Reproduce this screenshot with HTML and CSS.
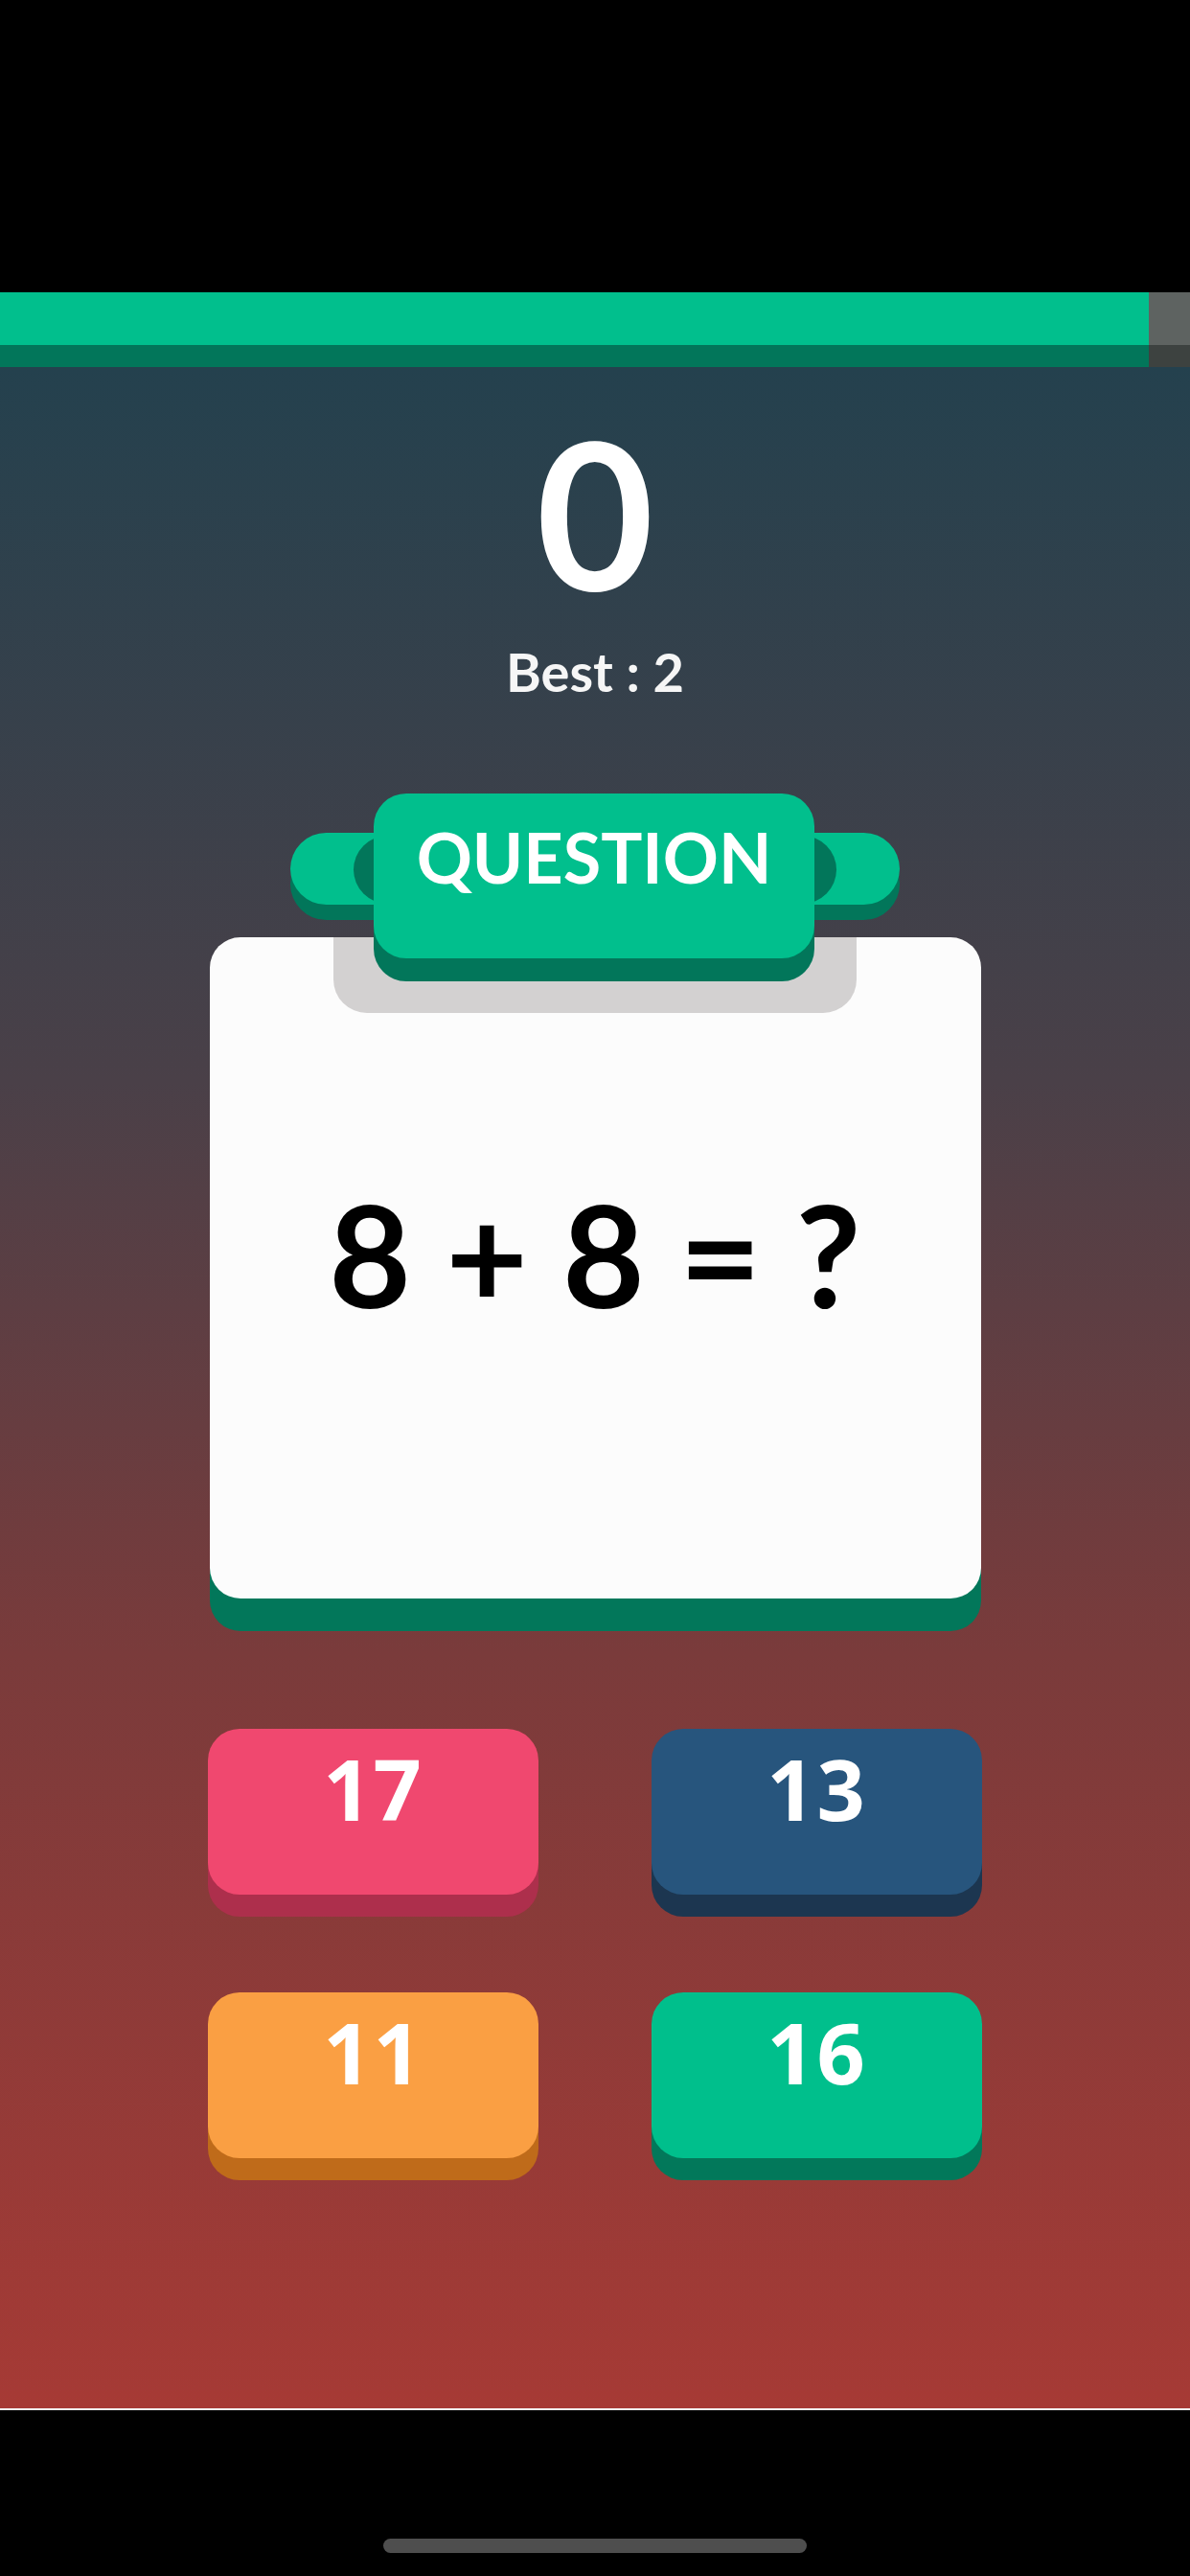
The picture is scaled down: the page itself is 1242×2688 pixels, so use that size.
FILE: index.html
```html
<!DOCTYPE html>
<html>
<head>
<meta charset="utf-8">
<link rel="stylesheet" href="styles.css">
</head>
<body>
<div class="screen">
  <div class="status"></div>
  <div class="progress">
    <div class="progress-fill"></div>
    <div class="progress-rest"></div>
  </div>
  <main class="game">
    <div class="score">0</div>
    <div class="best">Best : 2</div>
    <div class="question">
      <div class="qhead">
        <div class="qpill"></div>
        <div class="qpill-shade"></div>
        <div class="qbox">QUESTION</div>
      </div>
      <div class="card">
        <div class="card-tab"></div>
        <div class="equation">8 + 8 = ?</div>
      </div>
    </div>
    <div class="answers">
      <div class="answer pink">17</div>
      <div class="answer blue">13</div>
      <div class="answer orange">11</div>
      <div class="answer green">16</div>
    </div>
  </main>
  <div class="divider"></div>
  <div class="bottom">
    <div class="home-indicator"></div>
  </div>
</div>
</body>
</html>
```
FILE: styles.css
```css
* { box-sizing: border-box; }
html, body { margin: 0; padding: 0; background: #000; }
body { font-family: "Lato", "Noto Sans", sans-serif; font-weight: 700; }
.screen { width: 1242px; height: 2688px; display: flex; flex-direction: column; overflow: hidden; }
.status { height: 305px; background: #000; flex: 0 0 auto; }
.progress { height: 78px; display: flex; flex: 0 0 auto; }
.progress-fill { width: 1199px; background: #01bf8d; border-bottom: 23px solid #02765a; }
.progress-rest { flex: 1; background: #5e6361; border-bottom: 23px solid #3d4240; }
.game {
  height: 2130px; flex: 0 0 auto;
  background: linear-gradient(to bottom, #24414e 0%, #4a4048 35%, #7a3b3b 63%, #a63a35 100%);
  display: flex; flex-direction: column; align-items: center;
}
.score { margin-top: 45px; font-size: 212px; line-height: 212px; height: 212px; color: #fff; }
.best { margin-top: 33px; font-size: 56px; line-height: 56px; height: 56px; color: #f6f6f6; }
.question { margin-top: 99px; display: flex; flex-direction: column; align-items: center; }
.qhead { position: relative; width: 636px; height: 196px; margin-bottom: -46px; z-index: 2; }
.qpill {
  position: absolute; left: 0; right: 0; top: 41px; height: 75px;
  background: #01bf8d; border-radius: 40px; box-shadow: 0 16px 0 #02765a;
}
.qpill-shade {
  position: absolute; left: 66px; right: 66px; top: 44px; height: 71px;
  background: #02765a; border-radius: 36px;
}
.qbox {
  position: absolute; left: 87px; width: 460px; top: 0; height: 172px;
  background: #01bf8d; border-radius: 34px; box-shadow: 0 24px 0 #02765a;
  color: #fff; font-size: 72px; line-height: 72px; text-align: center; padding-top: 30px;
}
.card {
  position: relative; z-index: 1; width: 805px; height: 690px;
  background: #fcfcfc; border-radius: 32px; box-shadow: 0 34px 0 #02775a;
  text-align: center;
}
.card-tab {
  position: absolute; top: 0; left: 129px; width: 546px; height: 79px;
  background: #d3d1d1; border-radius: 0 0 35px 35px;
}
.equation { padding-top: 256px; font-size: 148px; line-height: 148px; color: #000; }
.answers {
  margin-top: 136px; display: grid; grid-template-columns: 345px 345px;
  column-gap: 118px; row-gap: 102px;
}
.answer {
  height: 173px; border-radius: 33px; color: #fff; text-align: center;
  font-family: "Open Sans", "Lato", sans-serif; font-weight: 700;
  font-size: 88px; line-height: 88px; padding-top: 18px; letter-spacing: 2px;
}
.pink { background: #f0486f; box-shadow: 0 23px 0 #ad2f4c; }
.blue { background: #27557d; box-shadow: 0 23px 0 #1c3650; }
.orange { background: #fa9f43; box-shadow: 0 23px 0 #bf6b1a; }
.green { background: #00bf8c; box-shadow: 0 23px 0 #02785a; }
.divider { height: 2px; background: #f2f2f2; flex: 0 0 auto; }
.bottom { flex: 1; background: #000; display: flex; justify-content: center; }
.home-indicator { margin-top: 134px; width: 442px; height: 15px; border-radius: 8px; background: #4e4e4e; }
```
